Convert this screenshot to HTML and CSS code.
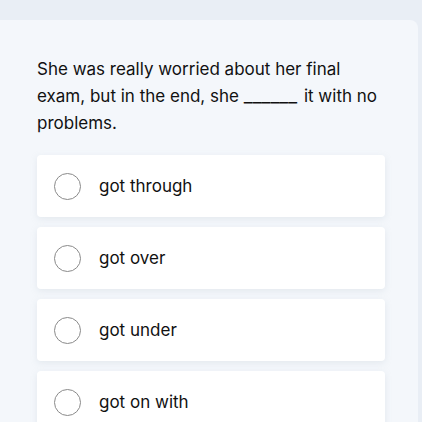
FILE: index.html
```html
<!DOCTYPE html>
<html>
<head>
<meta charset="utf-8">
<link rel="stylesheet" href="styles.css">
</head>
<body>
<div class="page">
  <div class="card">
    <p class="question">She was really worried about her final exam, but in the end, she <span class="blank">______</span> it with no problems.</p>
    <div class="options">
      <div class="option"><span class="radio"></span><span class="label">got through</span></div>
      <div class="option"><span class="radio"></span><span class="label">got over</span></div>
      <div class="option"><span class="radio"></span><span class="label">got under</span></div>
      <div class="option"><span class="radio"></span><span class="label">got on with</span></div>
    </div>
  </div>
</div>
</body>
</html>
```
FILE: styles.css
```css
html, body {
  margin: 0;
  padding: 0;
  background: #e9eef5;
  overflow: hidden;
}
.page {
  padding-top: 20px;
  height: 402px;
}
.card {
  width: 418px;
  height: 100%;
  background: #f4f7fb;
  border-top-right-radius: 8px;
  padding: 36px 37px 0 37px;
  box-sizing: border-box;
}
.question {
  margin: 0;
  font-family: "Inter", sans-serif;
  font-size: 17px;
  line-height: 27px;
  color: #111111;
  width: 348px;
}
.blank {
  font-size: 19.5px;
  line-height: 1;
  letter-spacing: 0;
  margin-right: 2px;
}
.options {
  margin-top: 18px;
  display: flex;
  flex-direction: column;
  gap: 10px;
  width: 348px;
}
.option {
  height: 62px;
  background: #ffffff;
  border-radius: 4px;
  box-shadow: 0 2px 6px rgba(180, 190, 205, 0.25);
  display: flex;
  align-items: center;
  padding-left: 17px;
  box-sizing: border-box;
}
.radio {
  width: 25px;
  height: 25px;
  border: 1.5px solid #8a8a8a;
  border-radius: 50%;
  flex: none;
}
.label {
  margin-left: 18px;
  font-family: "Inter", sans-serif;
  font-size: 17px;
  color: #111111;
}
```
